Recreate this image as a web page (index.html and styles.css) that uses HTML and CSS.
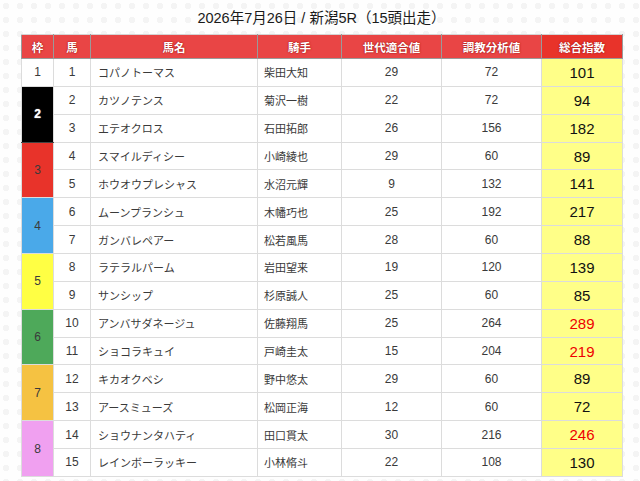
FILE: index.html
```html
<!DOCTYPE html>
<html lang="ja">
<head>
<meta charset="utf-8">
<link rel="stylesheet" href="styles.css">
</head>
<body>
<div class="page">
  <h1 class="title">2026年7月26日 / 新潟5R（15頭出走）</h1>
  <table class="race">
    <colgroup>
      <col class="c-waku"><col class="c-uma"><col class="c-name"><col class="c-jockey"><col class="c-val"><col class="c-val"><col class="c-total">
    </colgroup>
    <thead>
      <tr>
        <th>枠</th><th>馬</th><th>馬名</th><th>騎手</th><th>世代適合値</th><th>調教分析値</th><th class="th-total">総合指数</th>
      </tr>
    </thead>
    <tbody>
      <tr><td class="waku w1">1</td><td class="num">1</td><td class="name">コパノトーマス</td><td class="jk">柴田大知</td><td class="num">29</td><td class="num">72</td><td class="total">101</td></tr>
      <tr><td class="waku w2" rowspan="2">2</td><td class="num">2</td><td class="name">カツノテンス</td><td class="jk">菊沢一樹</td><td class="num">22</td><td class="num">72</td><td class="total">94</td></tr>
      <tr><td class="num">3</td><td class="name">エテオクロス</td><td class="jk">石田拓郎</td><td class="num">26</td><td class="num">156</td><td class="total">182</td></tr>
      <tr><td class="waku w3" rowspan="2">3</td><td class="num">4</td><td class="name">スマイルディシー</td><td class="jk">小崎綾也</td><td class="num">29</td><td class="num">60</td><td class="total">89</td></tr>
      <tr><td class="num">5</td><td class="name">ホウオウプレシャス</td><td class="jk">水沼元輝</td><td class="num">9</td><td class="num">132</td><td class="total">141</td></tr>
      <tr><td class="waku w4" rowspan="2">4</td><td class="num">6</td><td class="name">ムーンプランシュ</td><td class="jk">木幡巧也</td><td class="num">25</td><td class="num">192</td><td class="total">217</td></tr>
      <tr><td class="num">7</td><td class="name">ガンバレペアー</td><td class="jk">松若風馬</td><td class="num">28</td><td class="num">60</td><td class="total">88</td></tr>
      <tr><td class="waku w5" rowspan="2">5</td><td class="num">8</td><td class="name">ラテラルパーム</td><td class="jk">岩田望来</td><td class="num">19</td><td class="num">120</td><td class="total">139</td></tr>
      <tr><td class="num">9</td><td class="name">サンシップ</td><td class="jk">杉原誠人</td><td class="num">25</td><td class="num">60</td><td class="total">85</td></tr>
      <tr><td class="waku w6" rowspan="2">6</td><td class="num">10</td><td class="name">アンバサダネージュ</td><td class="jk">佐藤翔馬</td><td class="num">25</td><td class="num">264</td><td class="total hot">289</td></tr>
      <tr><td class="num">11</td><td class="name">ショコラキュイ</td><td class="jk">戸崎圭太</td><td class="num">15</td><td class="num">204</td><td class="total hot">219</td></tr>
      <tr><td class="waku w7" rowspan="2">7</td><td class="num">12</td><td class="name">キカオクベシ</td><td class="jk">野中悠太</td><td class="num">29</td><td class="num">60</td><td class="total">89</td></tr>
      <tr><td class="num">13</td><td class="name">アースミューズ</td><td class="jk">松岡正海</td><td class="num">12</td><td class="num">60</td><td class="total">72</td></tr>
      <tr><td class="waku w8" rowspan="2">8</td><td class="num">14</td><td class="name">ショウナンタハティ</td><td class="jk">田口貫太</td><td class="num">30</td><td class="num">216</td><td class="total hot">246</td></tr>
      <tr><td class="num">15</td><td class="name">レインボーラッキー</td><td class="jk">小林脩斗</td><td class="num">22</td><td class="num">108</td><td class="total">130</td></tr>
    </tbody>
  </table>
</div>
</body>
</html>
```

FILE: styles.css
```css
html, body {
  margin: 0;
  padding: 0;
}
body {
  background-color: #fefefe;
  background-image:
    radial-gradient(circle at 6px 6px, #f4f4f4 3px, transparent 3.5px);
  background-size: 14px 14px;
  font-family: "Liberation Sans", "Noto Sans CJK JP", sans-serif;
  color: #333;
}
.page {
  width: 601px;
  padding-left: 21px;
}
.title {
  margin: 0;
  height: 34px;
  line-height: 36px;
  text-align: center;
  font-size: 14.5px;
  font-weight: normal;
  color: #1a1a1a;
}
.race {
  width: 601px;
  border-collapse: collapse;
  table-layout: fixed;
  background: #fff;
  border: 1px solid #d4d4d4;
}
.c-waku { width: 32px; }
.c-uma { width: 37px; }
.c-name { width: 167px; }
.c-jockey { width: 84px; }
.c-val { width: 100px; }
.c-total { width: 81px; }
.race th {
  height: 23px;
  padding: 0;
  background: #e94545;
  color: #fff;
  font-size: 11.5px;
  font-weight: bold;
  text-align: center;
  border: 1px solid #9a9a9a;
  border-top-color: #d4d4d4;
  text-shadow: 0 0 2px #a31515, 0 0 1px #a31515;
}
.race th.th-total {
  background: #e8332a;
}
.race td {
  height: 26.87px;
  padding: 0;
  border: 1px solid #dcdcdc;
  font-size: 12px;
  color: #3a3a3a;
}
.race td.num,
.race td.waku {
  text-align: center;
}
.race td.name {
  padding-left: 7px;
  font-size: 11px;
}
.race td.jk {
  padding-left: 6px;
  font-size: 11px;
}
.race td.total {
  background: #ffff88;
  text-align: center;
  font-size: 15px;
  color: #111;
}
.race td.total.hot {
  color: #ee0000;
}
.waku { font-size: 12.5px; }
.w1 { background: #fff; }
.w2 { background: #000; color: #fff !important; font-weight: bold; text-shadow: 0 0 1px #fff; border-color: #444 #dcdcdc !important; }
.w3 { background: #e8332a; }
.w4 { background: #4aa9e9; }
.w5 { background: #ffff44; }
.w6 { background: #4ea95a; }
.w7 { background: #f5c242; }
.w8 { background: #f0a0f0; }
```
